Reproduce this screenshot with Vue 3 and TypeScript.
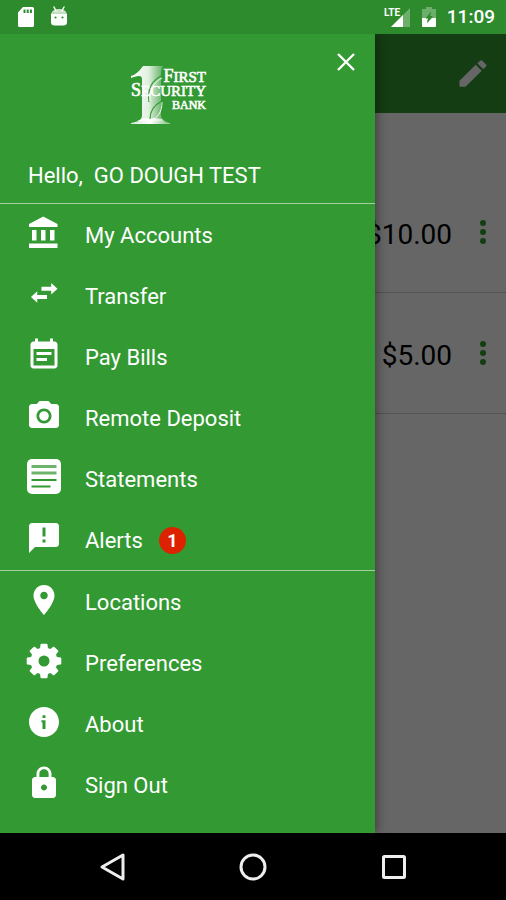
<script setup lang="ts">
interface MenuItem {
  label: string
  icon: string
  badge?: number
}

interface Account {
  id: number
  amount: string
}

const icons: Record<string, string> = {
  bank: 'M4 10v7h3v-7H4zm6 0v7h3v-7h-3zM2 22h19v-3H2v3zm14-12v7h3v-7h-3zm-4.500-9L2 6v2h19V6l-9.500-5z',
  transfer: 'M7.500 10.200L3.300 14l4.200 3.800v-2.500H14v-2.700H7.500v-2.400zM21 8.500l-4.200-3.800v2.500H10.300v2.700h6.500v2.400L21 8.500z',
  bills: 'M17 10H7v2h10v-2zm2-7h-1V1h-2v2H8V1H6v2H5c-1.110 0-1.990.9-1.990 2L3 19c0 1.100.890 2 2 2h14c1.100 0 2-.9 2-2V5c0-1.100-.9-2-2-2zm0 16H5V8h14v11zm-5-5H7v2h7v-2z',
  camera: 'M12 8.800a3.200 3.200 0 1 0 0 6.400a3.200 3.200 0 1 0 0-6.400zM9 2L7.170 4H4c-1.100 0-2 .9-2 2v12c0 1.100.9 2 2 2h16c1.100 0 2-.9 2-2V6c0-1.100-.9-2-2-2h-3.170L15 2H9zm3 15c-2.760 0-5-2.240-5-5s2.240-5 5-5 5 2.240 5 5-2.240 5-5 5z',
  alert: 'M20 2H4c-1.100 0-1.990.9-1.990 2L2 22l4-4h14c1.100 0 2-.9 2-2V4c0-1.100-.9-2-2-2zm-7 9h-2V5h2v6zm0 4h-2v-2h2v2z',
  pin: 'M12 2C8.130 2 5 5.130 5 9c0 5.250 7 13 7 13s7-7.750 7-13c0-3.870-3.130-7-7-7zm0 9.500c-1.380 0-2.500-1.120-2.500-2.500s1.120-2.500 2.500-2.500 2.500 1.120 2.500 2.500-1.120 2.500-2.500 2.500z',
  info: 'M12 2C6.480 2 2 6.480 2 12s4.480 10 10 10 10-4.480 10-10S17.520 2 12 2zm1 14.700h-2v-4.400h-.7v-1.500h2.700v5.900zm0-7.400h-2V7.500h2v1.800z',
  lock: 'M18 8h-1V6c0-2.760-2.240-5-5-5S7 3.240 7 6v2H6c-1.100 0-2 .9-2 2v10c0 1.100.9 2 2 2h12c1.100 0 2-.9 2-2V10c0-1.100-.9-2-2-2zm-6 9c-1.100 0-2-.9-2-2s.9-2 2-2 2 .9 2 2-.9 2-2 2zm3.100-9H8.900V6c0-1.710 1.390-3.100 3.100-3.100 1.710 0 3.100 1.390 3.100 3.100v2z',
}

const toothAngles = [0, 45, 90, 135, 180, 225, 270, 315]

const menuGroups: MenuItem[][] = [
  [
    { label: 'My Accounts', icon: 'bank' },
    { label: 'Transfer', icon: 'transfer' },
    { label: 'Pay Bills', icon: 'bills' },
    { label: 'Remote Deposit', icon: 'camera' },
    { label: 'Statements', icon: 'statements' },
    { label: 'Alerts', icon: 'alert', badge: 1 },
  ],
  [
    { label: 'Locations', icon: 'pin' },
    { label: 'Preferences', icon: 'gear' },
    { label: 'About', icon: 'info' },
    { label: 'Sign Out', icon: 'lock' },
  ],
]

const accounts: Account[] = [
  { id: 1, amount: '$10.00' },
  { id: 2, amount: '$5.00' },
]
</script>

<template>
  <div class="screen">
    <header class="status-bar">
      <svg class="status-icon" viewBox="0 0 20 22" aria-hidden="true">
        <path fill="#fff" fill-rule="evenodd" d="M7 1h9.500a1.500 1.500 0 0 1 1.500 1.500v17a1.500 1.500 0 0 1-1.500 1.500h-13A1.500 1.500 0 0 1 2 19.500V6.500zM7.500 3.500v3.500h2V3.500zM10.700 3.500v3.500h2V3.500zM13.900 3.500v3.500h2V3.500z" />
      </svg>
      <svg class="status-icon" viewBox="0 0 20 22" aria-hidden="true">
        <path stroke="#fff" stroke-width="1.400" stroke-linecap="round" d="M5 1l2 4M15 1l-2 4" />
        <path fill="#fff" fill-opacity=".75" d="M2.500 7.500C3 4.500 6 3 10 3s7 1.500 7.500 4.500z" />
        <path fill="#fff" d="M2 7.500h16v8.500a3.500 3.500 0 0 1-3.500 3.500h-9A3.500 3.500 0 0 1 2 16z" />
        <circle cx="6.500" cy="11.500" r="1.100" fill="#2d8b2d" />
        <circle cx="13.500" cy="11.500" r="1.100" fill="#2d8b2d" />
      </svg>
      <span class="spacer"></span>
      <svg class="signal" viewBox="0 0 28 22" aria-hidden="true">
        <path fill="#fff" fill-opacity=".3" d="M27 2v19H8z" />
        <path fill="#fff" d="M20 9V21H8z" />
        <text x="1" y="10" class="lte">LTE</text>
      </svg>
      <svg class="battery" viewBox="0 0 16 22" aria-hidden="true">
        <path fill="#fff" fill-opacity=".3" d="M5 1h6v2h4v10H1V3h4z" />
        <path fill="#fff" d="M1 12h6l-1 4 5-4h4v8a1 1 0 0 1-1 1H2a1 1 0 0 1-1-1z" />
        <path fill="#2d8b2d" d="M10.500 5L4.500 12.500h3l-1.500 5 6-7.500H9z" />
      </svg>
      <time class="clock">11:09</time>
    </header>

    <div class="stage">
      <main class="content">
        <div class="app-bar">
          <button class="edit" type="button" aria-label="Edit">
            <svg viewBox="0 0 24 24" aria-hidden="true">
              <path fill="#fff" d="M3 16.500V20.500h4L17.800 9.900l-4-4L3 16.500zM20.700 7a1 1 0 0 0 0-1.400l-2.500-2.500a1 1 0 0 0-1.400 0l-1.900 1.800 4 4L20.700 7z" />
            </svg>
          </button>
        </div>
        <ul class="accounts">
          <li v-for="account in accounts" :key="account.id" class="account">
            <span class="amount">{{ account.amount }}</span>
            <button class="more" type="button" aria-label="More options">
              <i></i><i></i><i></i>
            </button>
          </li>
        </ul>
      </main>
      <div class="scrim"></div>

      <aside class="drawer">
        <div class="drawer-head">
          <div class="brand-row">
            <svg class="logo" viewBox="0 0 80 62" role="img" aria-label="First Security Bank">
              <defs>
                <linearGradient id="stem" x1="0" y1="0" x2="1" y2="0">
                  <stop offset="0" stop-color="#fff" />
                  <stop offset=".5" stop-color="#fff" stop-opacity=".85" />
                  <stop offset="1" stop-color="#fff" stop-opacity=".1" />
                </linearGradient>
                <linearGradient id="base" x1="0" y1="0" x2="1" y2="0">
                  <stop offset="0" stop-color="#fff" stop-opacity=".8" />
                  <stop offset=".5" stop-color="#fff" />
                  <stop offset="1" stop-color="#fff" stop-opacity=".4" />
                </linearGradient>
              </defs>
              <path fill="url(#stem)" d="M2 12c6-2 9-6 12-10h20c-2 3-2 6-2 10v39c0 3 2 5 5 6H8c4-1 5-3 5-6V15c0-2-1-3-3-3-3 0-5 1-8 2z" />
              <path fill="url(#base)" d="M2 59c3-1 8-1 10-4 3-1 18-1 21 0 2 3 5 3 8 4v1H2z" />
              <path fill="none" stroke="#339933" stroke-width="1.200" d="M34 11c-11 5-16 14-14 27M21 55c0-9 4-14 12-18" />
              <path fill="none" stroke="#fff" stroke-opacity=".9" d="M33 14c-9 5-13 13-12 23M21 57c8-3 12-9 12-19" />
              <g class="wordmark">
                <text x="77" y="18" class="caps-15"><tspan class="caps-18">F</tspan>IRST</text>
                <text x="77" y="32" class="caps-15"><tspan class="caps-18">S</tspan>ECURITY</text>
                <text x="77" y="45" class="caps-12">BANK</text>
              </g>
            </svg>
            <button class="close" type="button" aria-label="Close menu">
              <svg viewBox="0 0 20 20" aria-hidden="true">
                <path stroke="#fff" stroke-width="2.400" d="M2 2l16 16M18 2L2 18" />
              </svg>
            </button>
          </div>
          <p class="greeting">Hello,&nbsp; GO DOUGH TEST</p>
        </div>

        <nav>
          <ul v-for="(group, index) in menuGroups" :key="index" class="menu">
            <li v-for="item in group" :key="item.label">
              <a href="#" class="menu-link">
                <svg v-if="item.icon === 'statements'" class="icon" viewBox="0 0 36 36" aria-hidden="true">
                  <rect x="1" y="0" width="34" height="35" rx="5" fill="#fff" />
                  <path stroke="#6db56d" stroke-width="3" d="M5.500 7.500h25M5.500 14h25" />
                  <path stroke="#339933" stroke-width="2" d="M5.500 21h25M5.500 27.500h19" />
                </svg>
                <svg v-else-if="item.icon === 'gear'" class="icon" viewBox="-18 -18 36 36" aria-hidden="true">
                  <circle r="9.500" fill="none" stroke="#fff" stroke-width="8" />
                  <path
                    v-for="angle in toothAngles"
                    :key="angle"
                    fill="#fff"
                    d="M-4.200-11L-3.500-16.500Q-3.400-17.300-2.600-17.300H2.600Q3.400-17.300 3.500-16.500L4.200-11z"
                    :transform="`rotate(${angle})`"
                  />
                </svg>
                <svg v-else class="icon" viewBox="0 0 24 24" aria-hidden="true">
                  <path fill="#fff" :d="icons[item.icon]" />
                </svg>
                <span>{{ item.label }}</span>
                <span v-if="item.badge" class="badge">{{ item.badge }}</span>
              </a>
            </li>
          </ul>
        </nav>
      </aside>
    </div>

    <footer class="nav-bar">
      <button type="button" aria-label="Back">
        <svg viewBox="0 0 32 32" aria-hidden="true">
          <path fill="none" stroke="#eee" stroke-width="3" stroke-linejoin="round" d="M27 4v24L6 16z" />
        </svg>
      </button>
      <button type="button" aria-label="Home">
        <svg viewBox="0 0 32 32" aria-hidden="true">
          <circle cx="16" cy="16" r="12" fill="none" stroke="#eee" stroke-width="3" />
        </svg>
      </button>
      <button type="button" aria-label="Recent apps">
        <svg viewBox="0 0 32 32" aria-hidden="true">
          <rect x="5.500" y="5.500" width="21" height="21" rx="1" fill="none" stroke="#eee" stroke-width="3" />
        </svg>
      </button>
    </footer>
  </div>
</template>

<style>
body {
  margin: 0;
}
</style>

<style scoped>
.screen {
  display: flex;
  flex-direction: column;
  min-height: 100vh;
  font-family: Roboto, "Liberation Sans", sans-serif;
  font-size: 22px;
  color: #fff;
}

button {
  display: flex;
  align-items: center;
  justify-content: center;
  padding: 0;
  border: 0;
  background: none;
  cursor: pointer;
}

ul {
  margin: 0;
  padding: 0;
  list-style: none;
}

.status-bar {
  display: flex;
  align-items: center;
  height: 34px;
  padding: 0 11px 0 16px;
  background: #2d8b2d;
}

.status-icon {
  width: 20px;
  height: 22px;
  margin-right: 13px;
}

.spacer {
  flex: 1;
}

.signal {
  width: 28px;
  height: 22px;
  margin-right: 10px;
}

.lte {
  fill: #fff;
  font-size: 10px;
  font-weight: 700;
}

.battery {
  width: 16px;
  height: 22px;
  margin-right: 10px;
}

.clock {
  font-size: 19px;
  font-weight: 500;
  line-height: 36px;
}

.stage {
  position: relative;
  display: grid;
  flex: 1;
}

.content,
.drawer {
  grid-area: 1 / 1;
}

.content {
  background: #fff;
  color: #000;
}

.app-bar {
  display: flex;
  align-items: center;
  justify-content: flex-end;
  height: 79px;
  padding-right: 15px;
  background: #339933;
}

.edit svg {
  width: 36px;
  height: 36px;
}

.accounts {
  padding-top: 59px;
}

.account {
  display: flex;
  align-items: center;
  justify-content: flex-end;
  gap: 22px;
  height: 120px;
  padding-right: 14px;
  border-bottom: 1px solid #d0d0d0;
}

.amount {
  padding-top: 4px;
  font-size: 28px;
}

.more {
  flex-direction: column;
  gap: 3px;
  width: 18px;
  height: 40px;
}

.more i {
  width: 6px;
  height: 6px;
  border-radius: 50%;
  background: #339933;
}

.scrim {
  position: absolute;
  inset: 0;
  background: rgba(0, 0, 0, 0.6);
}

.drawer {
  position: relative;
  width: calc(100% - 131px);
  background: #339933;
  box-shadow: 2px 0 10px rgba(0, 0, 0, 0.4);
  clip-path: inset(0 -20px 0 0);
}

.drawer-head {
  display: flex;
  flex-direction: column;
  justify-content: space-between;
  height: 169px;
  border-bottom: 1px solid #a3d0a3;
}

.brand-row {
  display: grid;
  grid-template-columns: 6fr 80px 7fr;
  padding: 14px 15px 0 0;
}

.logo {
  grid-column: 2;
  width: 80px;
  height: 62px;
  margin-top: 16px;
  overflow: visible;
}

.wordmark {
  fill: #fff;
  stroke: #fff;
  stroke-width: 0.6px;
  font-family: "Liberation Serif", serif;
  text-anchor: end;
}

.caps-18 {
  font-size: 18px;
}

.caps-15 {
  font-size: 15px;
}

.caps-12 {
  font-size: 12px;
}

.close {
  justify-self: end;
  width: 28px;
  height: 28px;
}

.close svg {
  width: 20px;
  height: 20px;
}

.greeting {
  margin: 0;
  padding: 0 28px 13px;
  line-height: 28px;
}

.menu + .menu {
  border-top: 1px solid #a3d0a3;
}

.menu-link {
  display: flex;
  align-items: center;
  box-sizing: border-box;
  height: 61px;
  padding: 1px 0 0 26px;
  color: #fff;
  text-decoration: none;
}

.icon {
  width: 36px;
  height: 36px;
  margin-right: 23px;
  padding-bottom: 5px;
}

.badge {
  width: 27px;
  height: 27px;
  margin-left: 16px;
  border-radius: 50%;
  background: #dd2200;
  font-size: 18px;
  font-weight: 700;
  line-height: 27px;
  text-align: center;
}

.nav-bar {
  display: flex;
  height: 67px;
  padding: 0 42px;
  background: #000;
}

.nav-bar button {
  flex: 1;
}

.nav-bar svg {
  width: 32px;
  height: 32px;
}
</style>
